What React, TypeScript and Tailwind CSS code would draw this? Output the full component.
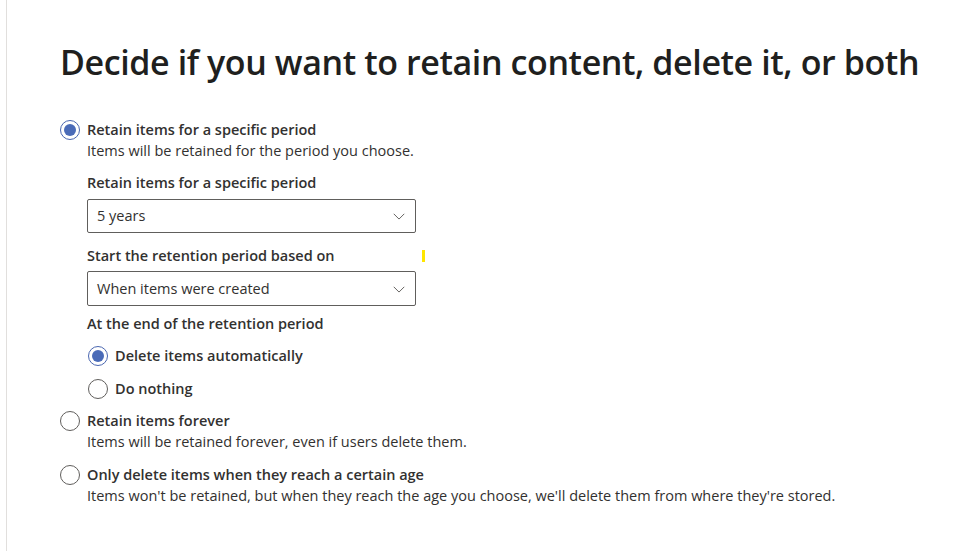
export default function App() {
  return (
    <div className="min-h-[551px] w-[970px] bg-white font-['Open_Sans',sans-serif] text-[#323130]">
      <div className="ml-[6px] min-h-[551px] border-l border-[#e1dfdd] pl-[53px] pt-[38px]">
        <h1 className="text-[34px] font-semibold leading-[48px] tracking-[-0.4px] text-[#201f1e]">
          Decide if you want to retain content, delete it, or both
        </h1>

        <div className="mt-[34px] flex flex-col">
          <RadioRow checked label="Retain items for a specific period" desc="Items will be retained for the period you choose." />

          <div className="ml-[27px] flex flex-col">
            <div className="mt-[12px] text-[14.5px] font-semibold leading-[20px]">Retain items for a specific period</div>
            <Dropdown value="5 years" />

            <div className="relative mt-[13px] text-[14.5px] font-semibold leading-[20px]">
              Start the retention period based on
              <span className="absolute left-[335px] top-[4px] h-[12px] w-[3px] bg-[#ffe600]" />
            </div>
            <div className="-mt-[1px]">
              <Dropdown value="When items were created" tall />
            </div>

            <div className="mt-[8px] text-[14.5px] font-semibold leading-[20px]">At the end of the retention period</div>
            <div className="mt-[12px] flex flex-col gap-[13px] pl-[1px]">
              <SubRadio checked label="Delete items automatically" />
              <SubRadio label="Do nothing" />
            </div>
          </div>

          <div className="mt-[12px]">
            <RadioRow label="Retain items forever" desc="Items will be retained forever, even if users delete them." />
          </div>
          <div className="mt-[13px]">
            <RadioRow
              label="Only delete items when they reach a certain age"
              desc="Items won't be retained, but when they reach the age you choose, we'll delete them from where they're stored."
            />
          </div>
        </div>
      </div>
    </div>
  );
}

function Circle({ checked }: { checked?: boolean }) {
  return (
    <span
      className={`flex h-[20px] w-[20px] shrink-0 items-center justify-center rounded-full border ${
        checked ? 'border-[#4a66b0]' : 'border-[#605e5c]'
      }`}
    >
      {checked && <span className="h-[12px] w-[12px] rounded-full bg-[#4a6bb8]" />}
    </span>
  );
}

function RadioRow({ checked, label, desc }: { checked?: boolean; label: string; desc: string }) {
  return (
    <div className="flex items-start gap-[7px]">
      <Circle checked={checked} />
      <div className="flex flex-col">
        <span className="text-[14.5px] font-semibold leading-[20px]">{label}</span>
        <span className="mt-[1px] text-[14.5px] leading-[20px] text-[#323130]">{desc}</span>
      </div>
    </div>
  );
}

function SubRadio({ checked, label }: { checked?: boolean; label: string }) {
  return (
    <div className="flex items-center gap-[7px]">
      <Circle checked={checked} />
      <span className="text-[14.5px] font-semibold leading-[20px]">{label}</span>
    </div>
  );
}

function Dropdown({ value, tall }: { value: string; tall?: boolean }) {
  return (
    <div
      className={`mt-[6px] flex ${tall ? 'h-[35px]' : 'h-[34px]'} w-[329px] items-center justify-between rounded-[2px] border border-[#605e5c] pl-[9px] pr-[9px]`}
    >
      <span className="text-[14.5px] leading-[20px]">{value}</span>
      <svg width="14" height="14" viewBox="0 0 16 16" fill="none">
        <path d="M2 5.5l6 6 6-6" stroke="#605e5c" strokeWidth="1.1" />
      </svg>
    </div>
  );
}
